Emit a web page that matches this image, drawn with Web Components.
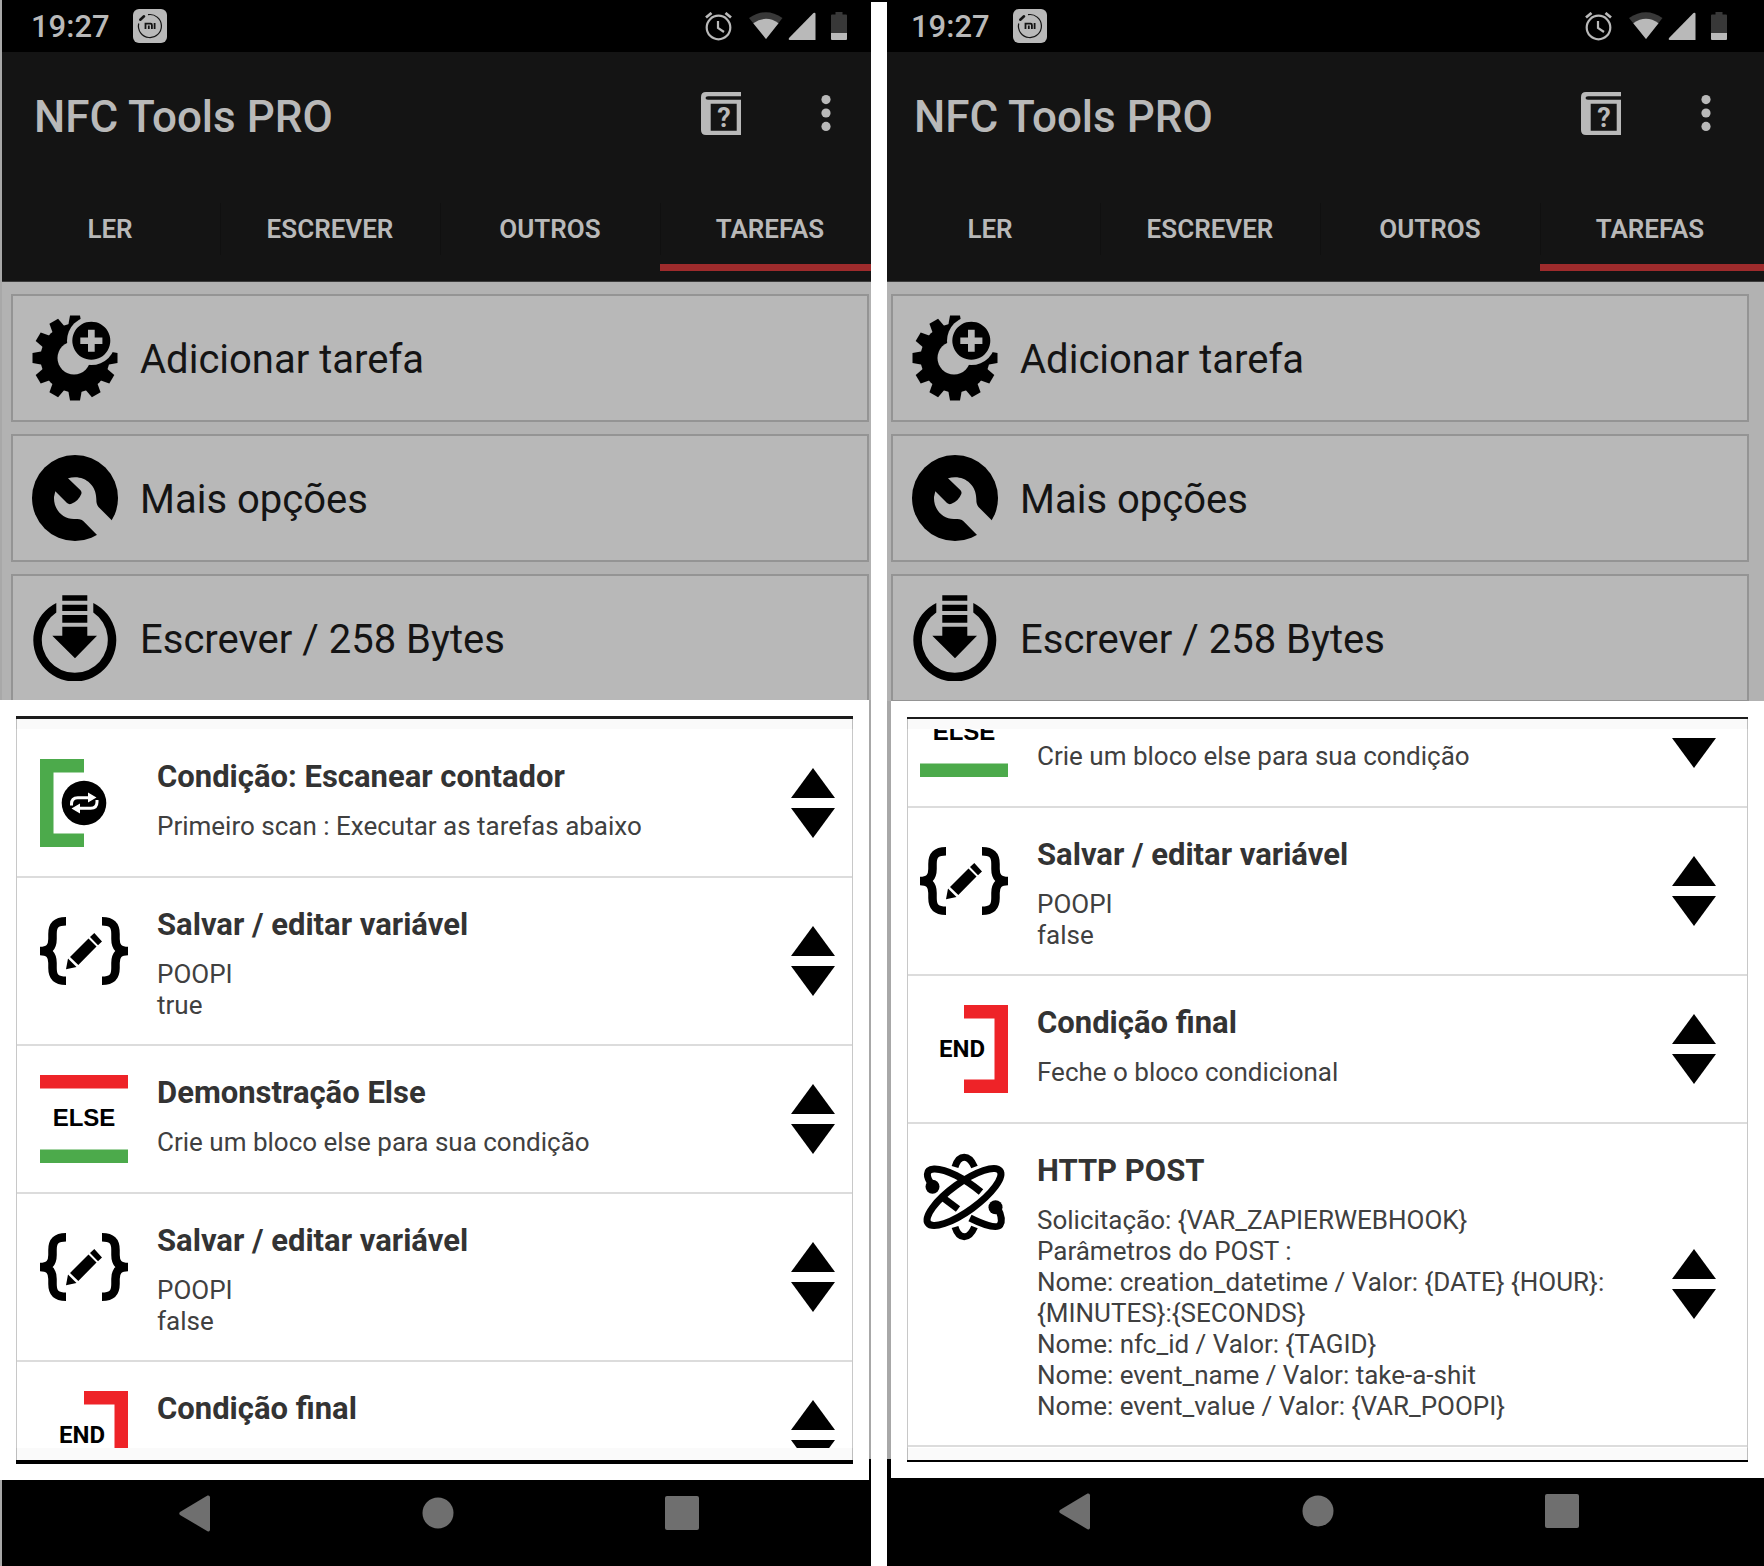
<!DOCTYPE html>
<html lang="pt">
<head>
<meta charset="utf-8">
<meta name="viewport" content="width=device-width, initial-scale=1">
<title>NFC Tools PRO</title>
<style>
  body {
    margin: 0;
    font-family: Roboto, "Liberation Sans", sans-serif;
    background: linear-gradient(#000 2px, #fff 2px);
  }
  main {
    display: grid;
    grid-template-columns: minmax(0, 871fr) minmax(0, 877fr);
    column-gap: 16px;
    min-height: 100vh;
  }
  /* How each device is cropped at its left and right edges */
  .first {
    --edge: 2px; --crop-left: -2px; --crop-right: -9px; --spill: 0px;
    --sheet-left: 0px; --sheet-right: 2px; --menu-height: 418px;
    --list-left: 23px; --list-right: 17px; --frame-top: 3px; --frame-bottom: 4px;
  }
  .second {
    --edge: 0px; --crop-left: -7px; --crop-right: 4px; --spill: -4px;
    --sheet-left: 4px; --sheet-right: 0px; --menu-height: 419px;
    --list-left: 12px; --list-right: 31px; --frame-top: 2px; --frame-bottom: 2px;
  }
</style>
</head>
<body>
<main>
  <phone-screen class="first">
    <task-sheet slot="sheet">
      <task-row icon="scan" heading="Condição: Escanear contador">Primeiro scan : Executar as tarefas abaixo</task-row>
      <task-row icon="variable" heading="Salvar / editar variável">POOPI<br>true</task-row>
      <task-row icon="else" heading="Demonstração Else">Crie um bloco else para sua condição</task-row>
      <task-row icon="variable" heading="Salvar / editar variável">POOPI<br>false</task-row>
      <task-row icon="end" heading="Condição final">Feche o bloco condicional</task-row>
    </task-sheet>
  </phone-screen>
  <phone-screen class="second">
    <task-sheet slot="sheet" at-end>
      <task-row icon="else" heading="Demonstração Else">Crie um bloco else para sua condição</task-row>
      <task-row icon="variable" heading="Salvar / editar variável">POOPI<br>false</task-row>
      <task-row icon="end" heading="Condição final">Feche o bloco condicional</task-row>
      <task-row icon="http" heading="HTTP POST">Solicitação: {VAR_ZAPIERWEBHOOK}<br>Parâmetros do POST :<br>Nome: creation_datetime / Valor: {DATE} {HOUR}:<br>{MINUTES}:{SECONDS}<br>Nome: nfc_id / Valor: {TAGID}<br>Nome: event_name / Valor: take-a-shit<br>Nome: event_value / Valor: {VAR_POOPI}</task-row>
    </task-sheet>
  </phone-screen>
</main>
<script>
const RESET = `
  *, *::before, *::after { box-sizing: border-box; }
  button { margin: 0; padding: 0; border: 0; background: none; color: inherit; font: inherit; text-align: inherit; cursor: pointer; }
  svg { display: block; flex: none; }
`;

const teeth = Array.from({ length: 12 }, (_, i) =>
  `<path d="M38 .5h10l2.500 14h-15z" transform="rotate(${i * 30} 43 43)"/>`).join('');

const ICONS = {
  add: [86, 86, `<mask id="m"><rect width="86" height="86" fill="#fff"/><circle cx="42" cy="43" r="16.500"/><circle cx="59.300" cy="25.700" r="24.300"/></mask>
    <g mask="url(#m)"><circle cx="43" cy="43" r="34.500"/>${teeth}</g>
    <path fill-rule="evenodd" d="M59.300 6.700a19 19 0 1 0 .01 0zM56 14.700h6.700v7.700h7.700v6.700h-7.700v7.700H56v-7.700h-7.700v-6.700H56z"/>`],
  tools: [86, 86, `<mask id="m"><rect width="86" height="86" fill="#fff"/><path d="M84.300 99.300 64.300 79.300 52.500 67.300Q49.500 64 45.500 64H42C30 64 21.500 54 22 42L23.300 36.300 35 48Q37 49.800 39.500 48.800Q46.500 46 49.300 39Q50 37 48.500 35.300L36 23.300C50 19 64.300 28 64.300 44Q64.300 49.500 66.500 52L99.300 84.700z"/></mask><circle cx="43" cy="43" r="43" mask="url(#m)"/>`],
  write: [86, 86, `<path d="M24.300 7.900V17.500A33 33 0 1 0 61.300 17.500V7.900A41.500 41.500 0 1 1 24.300 7.900z"/><path d="M30.300 .3h25v5.400h-25zM30.300 9.700h25V16h-25zM30.300 20h25v7.700h-25zM30.300 31.700h25v9H65L43 63.300 20.300 40.700h10z"/>`],
  scan: [88, 88, `<path fill="#4caa4b" d="M0 0h44v13.500H13.500v61H44V88H0z"/><circle cx="44" cy="44" r="22.300"/>
    <g fill="none" stroke="#fff" stroke-width="3"><path d="M31.500 46.500V45q0-6.300 6.300-6.300H49"/><path d="M57 41v2q0 6.300-6.300 6.300H39"/></g><path fill="#fff" d="M48 33.500v10l8.500-5zM40 44.500v10l-8.500-5z"/>`],
  variable: [88, 88, `<g fill="none" stroke="#000" stroke-width="8.500"><path d="M26 14.300C16 14.300 12.500 18 12.500 27V32C12.500 40 9 44 0 44C9 44 12.500 48 12.500 56V61C12.500 70 16 73.700 26 73.700"/><path d="M62 14.300C72 14.300 75.500 18 75.500 27V32C75.500 40 79 44 88 44C79 44 75.500 48 75.500 56V61C75.500 70 72 73.700 62 73.700"/></g>
    <path d="M26 62.300 28 51.500 36.500 60zM30 50 48.500 31.500 56.500 39.500 38.300 58zM50 30 54.300 26 62 34.500 58 38.300z"/>`],
  else: [88, 88, `<path fill="#ee2328" d="M0 0h88v13.500H0z"/><path fill="#4caa4b" d="M0 74.500h88V88H0z"/><text x="44" y="51" text-anchor="middle" font-family="Liberation Sans, sans-serif" font-weight="700" font-size="24">ELSE</text>`],
  end: [88, 88, `<path fill="#ee2328" d="M44 0h44v88H44V74.500h30.500v-61H44z"/><text x="42" y="52" text-anchor="middle" font-weight="700" font-size="24">END</text>`],
  http: [88, 88, `<g fill="none" stroke="#000" stroke-width="7"><ellipse cx="44" cy="44" rx="44.500" ry="14" transform="rotate(-36 44 44)"/>
    <path d="M12 32C6 24 5 16.500 14 16C26 15.500 45 26 61 39"/><path d="M22 44 38 56"/><path d="M50 65C62 71 76 76.500 80 72C82.500 68 81 61 77 54"/>
    <path d="M35 14C39 1 49 1 54.500 14"/><path d="M35 74C39 87 49 87 54.500 74"/></g><circle cx="12.500" cy="33.700" r="7"/><circle cx="75.500" cy="54.300" r="7"/>`],
  mi: [34, 34, `<rect width="34" height="34" rx="6" fill="#b9b9b9"/><g fill="none" stroke="#141414"><path stroke-width="1.200" d="M15 5.700A11.500 11.500 0 1 1 5.700 14.500"/><path stroke-width="2.600" stroke-linecap="round" d="M7.300 10.700 11 7.300"/><path stroke-width="1.800" d="M12.500 20v-5.300h5.200q1.200 0 1.200 1.200V20M15.800 16.500V20M21.600 14V20"/></g>`],
  alarm: [27, 29, `<g fill="none" stroke="#b9b9b9" stroke-width="2.200"><circle cx="13.500" cy="15.500" r="11.800"/><path d="M13 9v7l6 4"/><path stroke-width="2.800" d="M1 5.500 6.500 1M20.500 1 26 5.500"/></g>`],
  wifi: [34, 28, `<path fill="#383838" d="M17 27 0 6Q17-5.500 33.500 6z"/><path fill="#b9b9b9" d="M17 27 4.300 11.200Q17 2.500 29.500 11.200z"/>`],
  signal: [28, 28, `<path fill="#b9b9b9" d="M27.500 2v26H1.500Q0 27.500 1 26L25.500 1Q27.500 0 27.500 2z"/>`],
  battery: [16, 28, `<path fill="#383838" d="M4.500 0h7v2.500H15q1 0 1 1V21H0V3.500q0-1 1-1h3.500z"/><path fill="#b9b9b9" d="M0 21h16v6q0 1-1 1H1q-1 0-1-1z"/>`],
  book: [40, 43, `<path fill="#b9b9b9" fill-rule="evenodd" d="M5 0h35v4.300H7Q4.500 4.300 4.500 6T7 7.700H40V43H5Q0 43 0 38V5Q0 0 5 0zM9.700 11.700v27h26v-27z"/><text x="23" y="35" text-anchor="middle" fill="#b9b9b9" font-weight="700" font-size="27">?</text>`],
  more: [10, 36, `<g fill="#b9b9b9"><circle cx="5" cy="4.600" r="4.600"/><circle cx="5" cy="18" r="4.600"/><circle cx="5" cy="31.400" r="4.600"/></g>`],
  up: [44, 30, `<path d="M22 0 44 30H0z"/>`],
  down: [44, 30, `<path d="M22 30 44 0H0z"/>`],
  back: [32, 37, `<path fill="#6f6f6f" d="M1 17 28.500.6Q31 0 31 2.500v32Q31 37 28.500 36.200L1 20Q-.5 18.500 1 17z"/>`],
  home: [32, 32, `<circle cx="16" cy="16" r="15.500" fill="#6f6f6f"/>`],
  recents: [34, 34, `<rect width="34" height="34" rx="2" fill="#6f6f6f"/>`]
};

const icon = name => {
  const [w, h, body] = ICONS[name];
  return `<svg width="${w}" height="${h}" viewBox="0 0 ${w} ${h}" aria-hidden="true">${body}</svg>`;
};

class BaseElement extends HTMLElement {
  connectedCallback() {
    if (this.shadowRoot) return;
    this.attachShadow({ mode: 'open' }).innerHTML = `<style>${RESET}${this.css()}</style>${this.html()}`;
  }
}

customElements.define('status-bar', class extends BaseElement {
  css() { return `
    :host { display: block; height: 52px; margin-left: var(--edge); overflow: hidden; background: #000; color: #b9b9b9; }
    .row { display: flex; align-items: center; height: 52px; margin: 0 var(--crop-right) 0 var(--crop-left); padding: 0 33px 0 31px; }
    time { padding-top: 2px; font-size: 31px; font-weight: 500; line-height: 50px; margin-right: 23px; }
    .right { display: flex; align-items: center; margin-left: auto; }
    .right > :nth-child(1) { margin-right: 17px; }
    .right > :nth-child(2) { margin-right: 5px; }
    .right > :nth-child(3) { margin-right: 15px; }`; }
  html() { return `<div class="row"><time>19:27</time>${icon('mi')}<div class="right">${icon('alarm')}${icon('wifi')}${icon('signal')}${icon('battery')}</div></div>`; }
});

customElements.define('app-header', class extends BaseElement {
  css() { return `
    :host { display: block; margin-left: var(--edge); overflow: hidden; background: #141414; border-bottom: 1px solid #3c3c3c; color: #b9b9b9; }
    .screen { margin: 0 var(--crop-right) 0 var(--crop-left); padding-bottom: 10px; }
    .bar { display: flex; align-items: center; height: 130px; padding: 0 49px 0 34px; }
    h1 { flex: 1; margin: 0; font-size: 44px; font-weight: 500; white-space: nowrap; }
    .actions { display: flex; align-items: center; gap: 80px; padding-bottom: 8px; }
    nav { display: grid; grid-template-columns: repeat(4, minmax(0, 1fr)); margin-top: 12px; }
    nav button { position: relative; height: 77px; padding-bottom: 7px; font-size: 26px; font-weight: 600; text-align: center; }
    nav button + button { background: linear-gradient(#101010, #101010) 0 9px / 1px 52px no-repeat; }
    nav button[aria-current]::after { content: ""; position: absolute; left: 0; right: var(--spill); bottom: 0; height: 7px; background: #9e2b2c; }`; }
  html() { return `<div class="screen">
      <div class="bar"><h1>NFC Tools PRO</h1><div class="actions"><button aria-label="Ajuda">${icon('book')}</button><button aria-label="Menu">${icon('more')}</button></div></div>
      <nav><button>LER</button><button>ESCREVER</button><button>OUTROS</button><button aria-current="page">TAREFAS</button></nav>
    </div>`; }
});

customElements.define('menu-card', class extends BaseElement {
  css() { return `
    :host { display: block; }
    button { display: flex; align-items: center; gap: 22px; width: 100%; height: 128px; padding: 0 19px; border: 2px solid #949494; background: #b8b8b8; color: #141414; font-size: 40px; white-space: nowrap; }
    svg { fill: #000; }
    span { padding-top: 3px; }`; }
  html() { return `<button>${icon(this.getAttribute('icon'))}<span><slot></slot></span></button>`; }
});

customElements.define('task-row', class extends BaseElement {
  css() { return `
    :host { display: flex; flex: none; align-items: center; box-sizing: border-box; min-height: 148px; padding: 28px var(--list-right) 23px var(--list-left); border-bottom: 2px solid #dcdcdc; white-space: nowrap; }
    .icon { align-self: flex-start; margin-top: 1px; margin-bottom: -10px; }
    .text { flex: 1; align-self: flex-start; min-width: 0; margin-left: 29px; }
    h2 { margin: 0 0 15px; font-size: 31px; line-height: 38px; font-weight: 700; color: #333; }
    p { margin: 0; font-size: 26px; line-height: 31px; color: #404040; }
    .move { display: flex; flex-direction: column; gap: 10px; margin: -15px 0 -9px; }`; }
  html() { return `<div class="icon">${icon(this.getAttribute('icon'))}</div>
    <div class="text"><h2>${this.getAttribute('heading')}</h2><p><slot></slot></p></div>
    <div class="move"><button aria-label="Mover para cima">${icon('up')}</button><button aria-label="Mover para baixo">${icon('down')}</button></div>`; }
});

customElements.define('task-sheet', class extends BaseElement {
  css() { return `
    :host { display: block; margin: 0 var(--sheet-right) 0 var(--sheet-left); padding: 16px; background: #fff; }
    .frame { border-top: var(--frame-top) solid #1c1c1c; border-bottom: var(--frame-bottom) solid #000; padding: 10px 0 12px; background: #fafafa; box-shadow: inset 1px 0 #bdbdbd, inset -1px 0 #bdbdbd; }
    .list { display: flex; flex-direction: column; height: 719px; padding: 1px 0; overflow: hidden; background: #fff; border: solid #c8c8c8; border-width: 0 1px; }
    :host([at-end]) .list { justify-content: flex-end; }`; }
  html() { return `<div class="frame"><div class="list"><slot></slot></div></div>`; }
});

customElements.define('nav-keys', class extends BaseElement {
  css() { return `
    :host { display: block; flex: 1; margin-left: var(--edge); overflow: hidden; background: #000; }
    .row { display: flex; justify-content: space-between; align-items: center; height: 66px; margin: 0 var(--crop-right) 0 var(--crop-left); padding: 0 181px 0 179px; }`; }
  html() { return `<div class="row"><button aria-label="Voltar">${icon('back')}</button><button aria-label="Início">${icon('home')}</button><button aria-label="Recentes">${icon('recents')}</button></div>`; }
});

customElements.define('phone-screen', class extends BaseElement {
  css() { return `
    :host { display: flex; flex-direction: column; overflow: hidden; background: linear-gradient(#000, #000) right bottom / calc(100% - var(--edge)) 107px no-repeat, #a8a8a8; }
    .menu { height: var(--menu-height); margin-left: var(--edge); overflow: hidden; background: #b2b2b2; }
    .cards { display: flex; flex-direction: column; gap: 12px; margin: 0 var(--crop-right) 0 var(--crop-left); padding: 12px 11px 0; }`; }
  html() { return `<status-bar></status-bar><app-header></app-header>
    <div class="menu"><div class="cards">
      <menu-card icon="add">Adicionar tarefa</menu-card>
      <menu-card icon="tools">Mais opções</menu-card>
      <menu-card icon="write">Escrever / 258 Bytes</menu-card>
    </div></div>
    <slot name="sheet"></slot><nav-keys></nav-keys>`; }
});
</script>
</body>
</html>
